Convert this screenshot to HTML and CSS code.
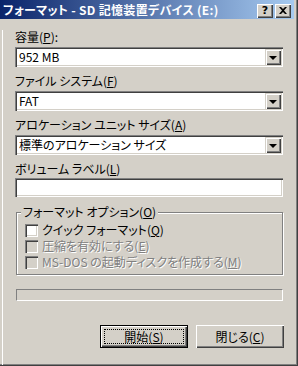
FILE: index.html
```html
<!DOCTYPE html>
<html lang="ja">
<head>
<meta charset="utf-8">
<link rel="stylesheet" href="styles.css">
</head>
<body>
<div class="window">
  <div class="titlebar">
    <span class="title">フォーマット - SD 記憶装置デバイス (E:)</span>
    <div class="tbtns">
      <span class="tbtn help">?</span>
      <span class="tbtn close"><svg width="8" height="7" viewBox="0 0 8 7"><path d="M0 0h2l2 2 2-2h2L5 3.5 8 7H6L4 5 2 7H0l3-3.5z" fill="#000"/></svg></span>
    </div>
  </div>
  <div class="content">
    <div class="label first">容量(<u>P</u>):</div>
    <div class="combo"><span class="val">952 MB</span><span class="drop"><span class="tri"></span></span></div>

    <div class="label">ファイル システム(<u>F</u>)</div>
    <div class="combo"><span class="val">FAT</span><span class="drop"><span class="tri"></span></span></div>

    <div class="label">アロケーション ユニット サイズ(<u>A</u>)</div>
    <div class="combo"><span class="val">標準のアロケーション サイズ</span><span class="drop"><span class="tri"></span></span></div>

    <div class="label">ボリューム ラベル(<u>L</u>)</div>
    <div class="textbox"></div>

    <fieldset class="group">
      <legend class="legend">フォーマット オプション(<u>O</u>)</legend>
      <div class="check"><span class="box"></span><span class="ctext">クイック フォーマット(<u>Q</u>)</span></div>
      <div class="check disabled"><span class="box"></span><span class="ctext">圧縮を有効にする(<u>E</u>)</span></div>
      <div class="check disabled"><span class="box"></span><span class="ctext">MS-DOS の起動ディスクを作成する(<u>M</u>)</span></div>
    </fieldset>

    <div class="progress"></div>

    <div class="buttons">
      <div class="btn default"><span class="focus">開始(<u>S</u>)</span></div>
      <div class="btn">閉じる(<u>C</u>)</div>
    </div>
  </div>
</div>
</body>
</html>
```

FILE: styles.css
```css
html, body {
  margin: 0;
  padding: 0;
  background: #d4d0c8;
}
body {
  font-family: "Noto Sans CJK JP", "DejaVu Sans", sans-serif;
  font-size: 12px;
  line-height: 14px;
  font-feature-settings: "palt";
  color: #000;
}
u { text-decoration: underline; text-underline-offset: 1px; }

.window {
  width: 298px;
  height: 366px;
  box-sizing: border-box;
  background: #d4d0c8;
  border-right: 1px solid #404040;
  border-bottom: 1px solid #404040;
  box-shadow: inset -1px -1px 0 #808080;
  overflow: hidden;
}

.titlebar {
  height: 19px;
  margin-right: 3px;
  background: linear-gradient(to right, #0a246a, #a6caf0);
  display: flex;
  align-items: center;
  justify-content: space-between;
  padding-left: 3px;
}
.title {
  color: #fff;
  font-weight: bold;
  font-size: 12px;
  line-height: 14px;
  letter-spacing: 0.3px;
  white-space: nowrap;
}
.tbtns {
  display: flex;
  gap: 2px;
  margin-right: 3px;
  margin-top: 2px;
}
.tbtn {
  width: 16px;
  height: 14px;
  background: #d4d0c8;
  box-shadow: inset 1px 1px 0 #fff, inset -1px -1px 0 #404040, inset -2px -2px 0 #808080;
  display: flex;
  align-items: center;
  justify-content: center;
  font-family: "DejaVu Sans", sans-serif;
  font-weight: bold;
  font-size: 11px;
  line-height: 14px;
  box-sizing: border-box;
}
.tbtn svg { display: block; margin-top: -1px; }

.content {
  margin-left: 2px;
  border-left: 1px solid #fff;
  padding: 0 14px 0 12px;
  height: 346px;
  box-sizing: border-box;
}

.label {
  margin-top: 7px;
  height: 14px;
  white-space: nowrap;
}
.label.first { margin-top: 11px; }

.combo, .textbox {
  margin-top: 3px;
  height: 20px;
  background: #fff;
  box-shadow: inset 1px 1px 0 #808080, inset 2px 2px 0 #404040, inset -1px -1px 0 #fff, inset -2px -2px 0 #d4d0c8;
  display: flex;
  align-items: center;
  justify-content: space-between;
  padding: 2px;
  box-sizing: border-box;
}
.textbox { height: 19px; margin-top: 2px; }
.val {
  padding-left: 2px;
  white-space: nowrap;
}
.drop {
  width: 16px;
  height: 16px;
  background: #d4d0c8;
  box-shadow: inset 1px 1px 0 #d4d0c8, inset 2px 2px 0 #fff, inset -1px -1px 0 #404040, inset -2px -2px 0 #808080;
  display: flex;
  align-items: center;
  justify-content: center;
}
.tri {
  width: 0;
  height: 0;
  border-left: 4px solid transparent;
  border-right: 4px solid transparent;
  border-top: 4px solid #000;
  margin-top: 1px;
}

.group {
  margin: 8px 0 0 1px;
  padding: 3px 0 7px 8px;
  border: 1px solid #808080;
  box-shadow: 1px 1px 0 #fff, inset 1px 1px 0 #fff;
  min-inline-size: 0;
  height: 70px;
  box-sizing: border-box;
}
.legend {
  padding: 0 2px;
  margin-left: -4px;
  background: #d4d0c8;
  line-height: 14px;
  white-space: nowrap;
}
.check {
  display: flex;
  align-items: center;
  height: 16px;
  white-space: nowrap;
}
.box {
  width: 13px;
  height: 13px;
  flex: none;
  box-sizing: border-box;
  background: #fff;
  box-shadow: inset 1px 1px 0 #808080, inset 2px 2px 0 #404040, inset -1px -1px 0 #fff, inset -2px -2px 0 #d4d0c8;
  margin-right: 4px;
}
.check.disabled .box { background: #d4d0c8; }
.check.disabled .ctext { color: #808080; text-shadow: 1px 1px 0 #fff; }

.progress {
  margin: 14px 0 0 1px;
  height: 12px;
  box-sizing: border-box;
  border-top: 1px solid #808080;
  border-left: 1px solid #808080;
  border-bottom: 1px solid #fff;
  border-right: 1px solid #fff;
}

.buttons {
  display: flex;
  justify-content: flex-end;
  gap: 8px;
  margin-top: 24px;
  margin-right: -1px;
}
.btn {
  width: 88px;
  height: 23px;
  box-sizing: border-box;
  background: #d4d0c8;
  box-shadow: inset 1px 1px 0 #fff, inset -1px -1px 0 #404040, inset -2px -2px 0 #808080;
  display: flex;
  align-items: center;
  justify-content: center;
}
.btn.default {
  border: 1px solid #000;
  padding: 3px;
}
.focus {
  flex: 1;
  align-self: stretch;
  border: 1px dotted #000;
  display: flex;
  align-items: center;
  justify-content: center;
}
```
